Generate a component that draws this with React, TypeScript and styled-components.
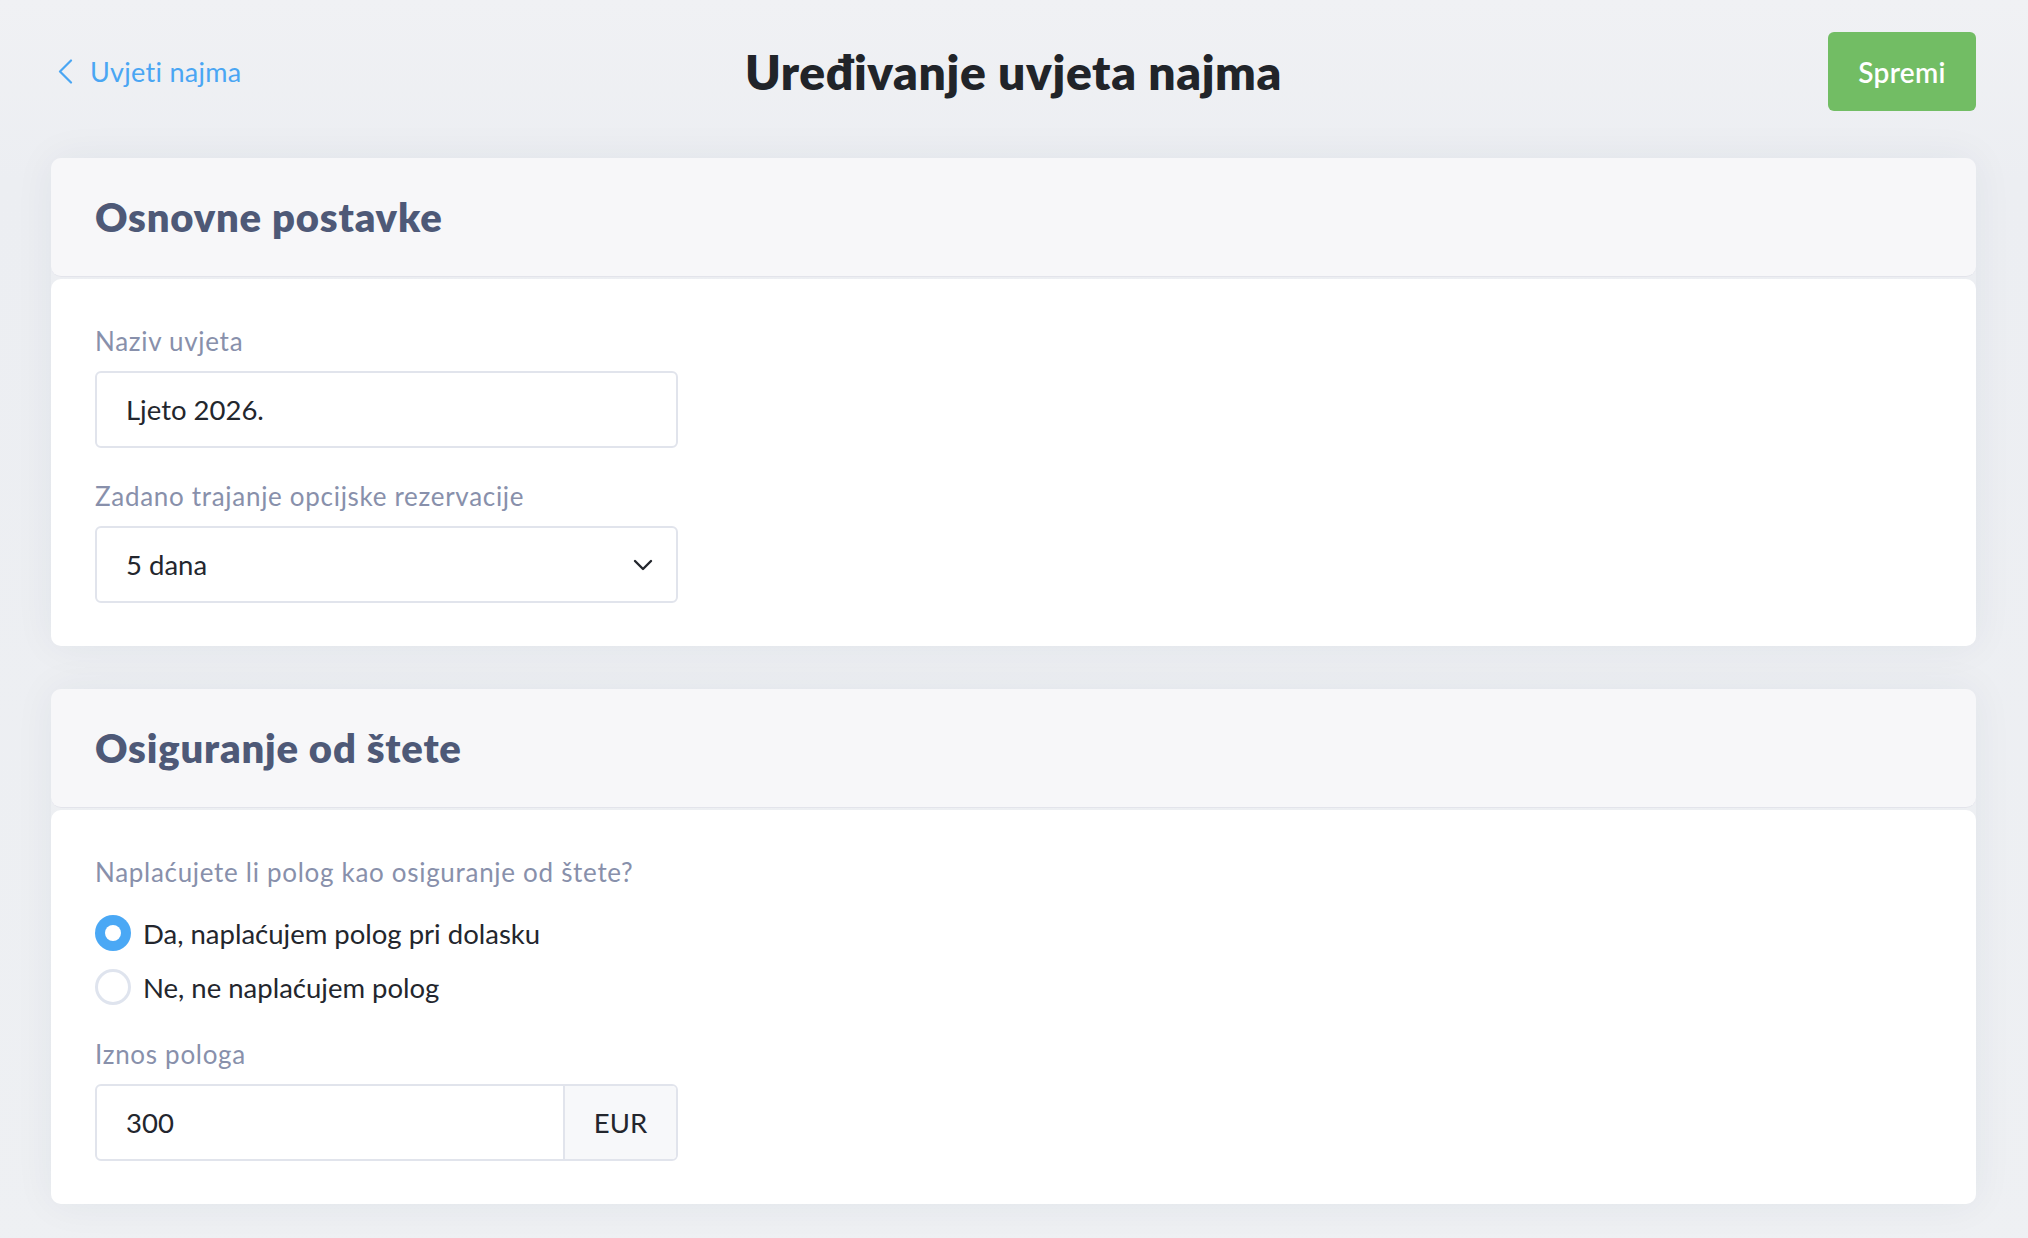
import styled, { createGlobalStyle } from "styled-components";

const GlobalStyle = createGlobalStyle`
    html, body {
        margin: 0;
        padding: 0;
        background: #eef0f3;
        font-family: "Lato", "Open Sans", sans-serif;
        color: #22252b;
    }
    * { box-sizing: border-box; }
`

const Page = styled.div`
    min-height: 1238px;
    padding: 32px 52px 40px 51px;
    background: linear-gradient(180deg, #f0f1f4 0%, #eceef2 14%, #eef0f3 100%);
`

const TopBar = styled.header`
    display: grid;
    grid-template-columns: 1fr auto 1fr;
    align-items: center;
    height: 79px;
    margin-bottom: 47px;
`

const BackLink = styled.a`
    display: flex;
    align-items: center;
    gap: 17px;
    padding-left: 7px;
    color: #4aa6f3;
    font-size: 27px;
    letter-spacing: 0.3px;
    text-decoration: none;
    cursor: pointer;
`

const Title = styled.h1`
    margin: 0;
    font-size: 48px;
    font-weight: 800;
    color: #212429;
    letter-spacing: 0.6px;
`

const SaveButton = styled.button`
    justify-self: end;
    width: 148px;
    height: 79px;
    border: none;
    border-radius: 6px;
    background: #72bd64;
    color: #fff;
    font-family: inherit;
    font-size: 28px;
    font-weight: 600;
    letter-spacing: 0.3px;
    cursor: pointer;
`

const Card = styled.section`
    display: flex;
    flex-direction: column;
    border-radius: 10px;
    box-shadow: 0 0 40px rgba(40, 50, 90, 0.06);
    margin-bottom: 43px;
`

const CardHeader = styled.div`
    display: flex;
    align-items: center;
    height: 119px;
    padding: 0 44px;
    background: #f7f7f9;
    border-radius: 10px;
    border-bottom: 1px solid #e3e4eb;
`

const CardTitle = styled.h2`
    margin: 0;
    font-size: 40px;
    font-weight: 800;
    letter-spacing: 0.8px;
    color: #4e5977;
`

const CardBody = styled.div`
    margin-top: 2px;
    padding: 45px 44px 43px;
    background: #fff;
    border-radius: 10px;
`

const Field = styled.div<{ $last?: boolean }>`
    display: flex;
    flex-direction: column;
    width: 583px;
    margin-bottom: ${({ $last }) => ($last ? "0" : "31px")};
`

const Label = styled.label<{ $gap?: number }>`
    display: block;
    font-size: 26px;
    line-height: 34px;
    letter-spacing: 0.7px;
    color: #8890ab;
    margin-bottom: ${({ $gap }) => $gap ?? 13}px;
`

const InputBox = styled.div`
    display: flex;
    align-items: stretch;
    height: 77px;
    border: 2px solid #e1e4ec;
    border-radius: 6px;
    background: #fff;
    overflow: hidden;
`

const TextValue = styled.div`
    flex: 1;
    display: flex;
    align-items: center;
    justify-content: space-between;
    padding: 0 23px 0 29px;
    font-size: 27.5px;
    color: #23262d;
`

const Addon = styled.div`
    display: flex;
    align-items: center;
    justify-content: center;
    width: 113px;
    border-left: 2px solid #e1e4ec;
    background: #f7f8fa;
    font-size: 27.5px;
    color: #23262d;
`

const RadioGroup = styled.div`
    display: flex;
    flex-direction: column;
    gap: 18px;
    margin: 26px 0 32px;
`

const RadioRow = styled.label`
    display: flex;
    align-items: center;
    gap: 12px;
    font-size: 27.5px;
    color: #23262d;
    cursor: pointer;
`

const RadioDot = styled.span<{ $checked?: boolean }>`
    display: flex;
    align-items: center;
    justify-content: center;
    width: 36px;
    height: 36px;
    border-radius: 50%;
    background: ${({ $checked }) => ($checked ? "#4aa8f5" : "#fff")};
    border: ${({ $checked }) => ($checked ? "none" : "3px solid #dfe4ee")};

    &::after {
        content: "";
        display: ${({ $checked }) => ($checked ? "block" : "none")};
        width: 16px;
        height: 16px;
        border-radius: 50%;
        background: #fff;
    }
`

function Chevron({ dir }: { dir: "left" | "down" }) {
    if (dir === "left") {
        return (
            <svg width="15" height="25" viewBox="0 0 15 25" fill="none">
                <path d="M13 1.5 L2 12.5 L13 23.5" stroke="#4aa6f3" strokeWidth="2.2" strokeLinecap="round" strokeLinejoin="round" />
            </svg>
        )
    }
    return (
        <svg width="20" height="12" viewBox="0 0 20 12" fill="none">
            <path d="M2 2 L10 10 L18 2" stroke="#23262d" strokeWidth="2.4" strokeLinecap="round" strokeLinejoin="round" />
        </svg>
    )
}

export default function App() {
    return (
        <>
            <GlobalStyle />
            <Page>
                <TopBar>
                    <BackLink>
                        <Chevron dir="left" />
                        Uvjeti najma
                    </BackLink>
                    <Title>Uređivanje uvjeta najma</Title>
                    <SaveButton>Spremi</SaveButton>
                </TopBar>

                <Card>
                    <CardHeader>
                        <CardTitle>Osnovne postavke</CardTitle>
                    </CardHeader>
                    <CardBody>
                        <Field>
                            <Label>Naziv uvjeta</Label>
                            <InputBox>
                                <TextValue>Ljeto 2026.</TextValue>
                            </InputBox>
                        </Field>
                        <Field $last>
                            <Label>Zadano trajanje opcijske rezervacije</Label>
                            <InputBox>
                                <TextValue>
                                    5 dana
                                    <Chevron dir="down" />
                                </TextValue>
                            </InputBox>
                        </Field>
                    </CardBody>
                </Card>

                <Card>
                    <CardHeader>
                        <CardTitle>Osiguranje od štete</CardTitle>
                    </CardHeader>
                    <CardBody>
                        <Label $gap={0}>Naplaćujete li polog kao osiguranje od štete?</Label>
                        <RadioGroup>
                            <RadioRow>
                                <RadioDot $checked />
                                Da, naplaćujem polog pri dolasku
                            </RadioRow>
                            <RadioRow>
                                <RadioDot />
                                Ne, ne naplaćujem polog
                            </RadioRow>
                        </RadioGroup>
                        <Field $last>
                            <Label>Iznos pologa</Label>
                            <InputBox>
                                <TextValue>300</TextValue>
                                <Addon>EUR</Addon>
                            </InputBox>
                        </Field>
                    </CardBody>
                </Card>
            </Page>
        </>
    )
}
